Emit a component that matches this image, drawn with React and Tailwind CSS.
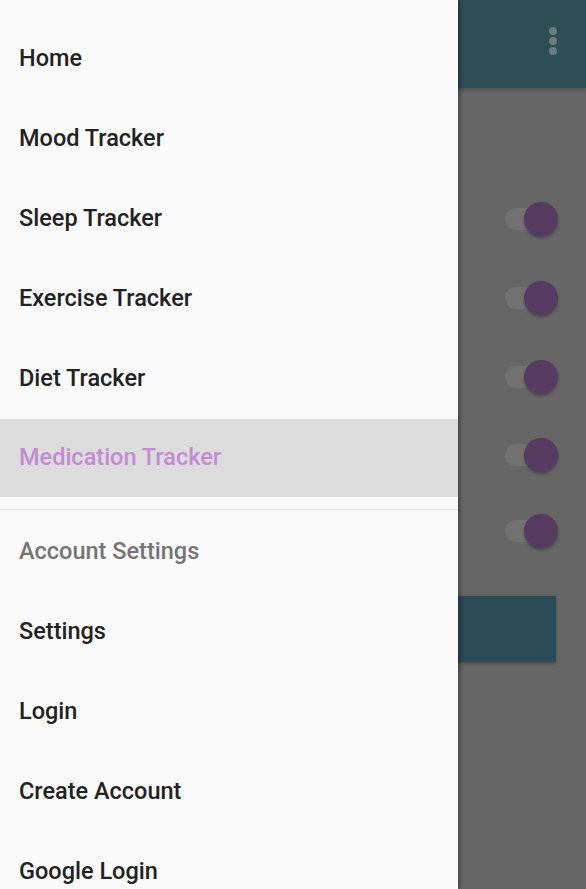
import React from "react";

const items = ["Home", "Mood Tracker", "Sleep Tracker", "Exercise Tracker", "Diet Tracker"];
const items2 = ["Settings", "Login", "Create Account", "Google Login"];

function Toggle({ mt }) {
  return (
    <div className={`relative h-[34px] w-full shrink-0 ${mt}`}>
      <div className="absolute left-[47px] top-[6px] h-[22px] w-[40px] rounded-full bg-[#727272]" />
      <div className="absolute left-[66px] top-0 h-[34px] w-[34px] rounded-full bg-[#583b61] shadow-[0_2px_3px_rgba(0,0,0,0.3)]" />
    </div>
  );
}

export default function App() {
  return (
    <div className="flex h-[889px] w-[586px] overflow-hidden" style={{ fontFamily: "Roboto, 'Liberation Sans', sans-serif" }}>
      <div className="relative z-10 flex w-[458px] shrink-0 flex-col bg-[#fafafa] shadow-[2px_0_4px_rgba(0,0,0,0.35)]">
        <div className="h-[19px] shrink-0" />
        {items.map((t) => (
          <div key={t} className="flex h-[80px] shrink-0 items-center pl-[19px] text-[23.5px] font-medium text-[#222222]">
            {t}
          </div>
        ))}
        <div className="flex h-[78px] shrink-0 items-center bg-[#dcdcdc] pl-[19px] text-[23.5px] font-medium text-[#c48ad3]">
          Medication Tracker
        </div>
        <div className="mt-[12px] h-px shrink-0 bg-[#e2e2e2]" />
        <div className="h-[2px] shrink-0" />
        <div className="flex h-[80px] shrink-0 items-center pl-[19px] text-[23.5px] font-medium text-[#757575]">
          Account Settings
        </div>
        {items2.map((t) => (
          <div key={t} className="flex h-[80px] shrink-0 items-center pl-[19px] text-[23.5px] font-medium text-[#222222]">
            {t}
          </div>
        ))}
      </div>
      <div className="relative -ml-[100px] flex flex-1 flex-col bg-[#666666]">
        <div className="relative h-[88px] shrink-0 bg-[#2f4f57] shadow-[0_2px_3px_rgba(0,0,0,0.2)]">
          <div className="absolute right-[29px] top-[27px] flex flex-col gap-[2px]">
            <div className="h-[8px] w-[8px] rounded-full bg-[#6a7c83]" />
            <div className="h-[8px] w-[8px] rounded-full bg-[#6a7c83]" />
            <div className="h-[8px] w-[8px] rounded-full bg-[#6a7c83]" />
          </div>
        </div>
        <div className="shrink-0 pl-[100px]">
          <Toggle mt="mt-[114px]" />
          <Toggle mt="mt-[45px]" />
          <Toggle mt="mt-[45px]" />
          <Toggle mt="mt-[44px]" />
          <Toggle mt="mt-[42px]" />
        </div>
        <div className="mr-[30px] mt-[48px] h-[66px] shrink-0 bg-[#2a4a55] shadow-[0_2px_3px_rgba(0,0,0,0.25)]" />
      </div>
    </div>
  );
}
